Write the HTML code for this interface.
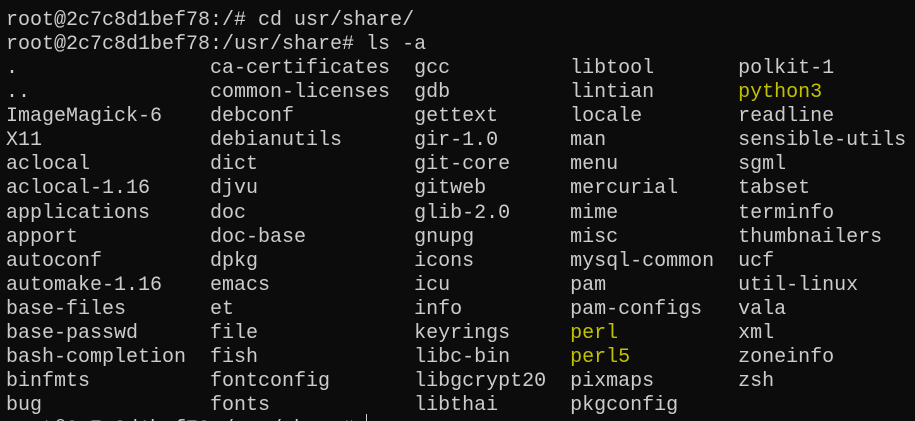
<!DOCTYPE html>
<html><head><style>
html,body{margin:0;padding:0;background:#0c0c0c;width:915px;height:421px;overflow:hidden;position:relative}
pre{margin:0;position:absolute;left:6px;top:9px;font-family:"Liberation Mono","DejaVu Sans Mono",monospace;font-size:20px;line-height:24.06px;color:#cccccc}
.y{color:#c1c100}
.cur{position:absolute;left:366px;top:414px;width:1px;height:7px;background:#ccc}
</style></head><body>
<pre>root@2c7c8d1bef78:/# cd usr/share/
root@2c7c8d1bef78:/usr/share# ls -a
.                ca-certificates  gcc          libtool       polkit-1
..               common-licenses  gdb          lintian       <span class="y">python3</span>
ImageMagick-6    debconf          gettext      locale        readline
X11              debianutils      gir-1.0      man           sensible-utils
aclocal          dict             git-core     menu          sgml
aclocal-1.16     djvu             gitweb       mercurial     tabset
applications     doc              glib-2.0     mime          terminfo
apport           doc-base         gnupg        misc          thumbnailers
autoconf         dpkg             icons        mysql-common  ucf
automake-1.16    emacs            icu          pam           util-linux
base-files       et               info         pam-configs   vala
base-passwd      file             keyrings     <span class="y">perl</span>          xml
bash-completion  fish             libc-bin     <span class="y">perl5</span>         zoneinfo
binfmts          fontconfig       libgcrypt20  pixmaps       zsh
bug              fonts            libthai      pkgconfig
root@2c7c8d1bef78:/usr/share# </pre>
<div class="cur"></div>
</body></html>
